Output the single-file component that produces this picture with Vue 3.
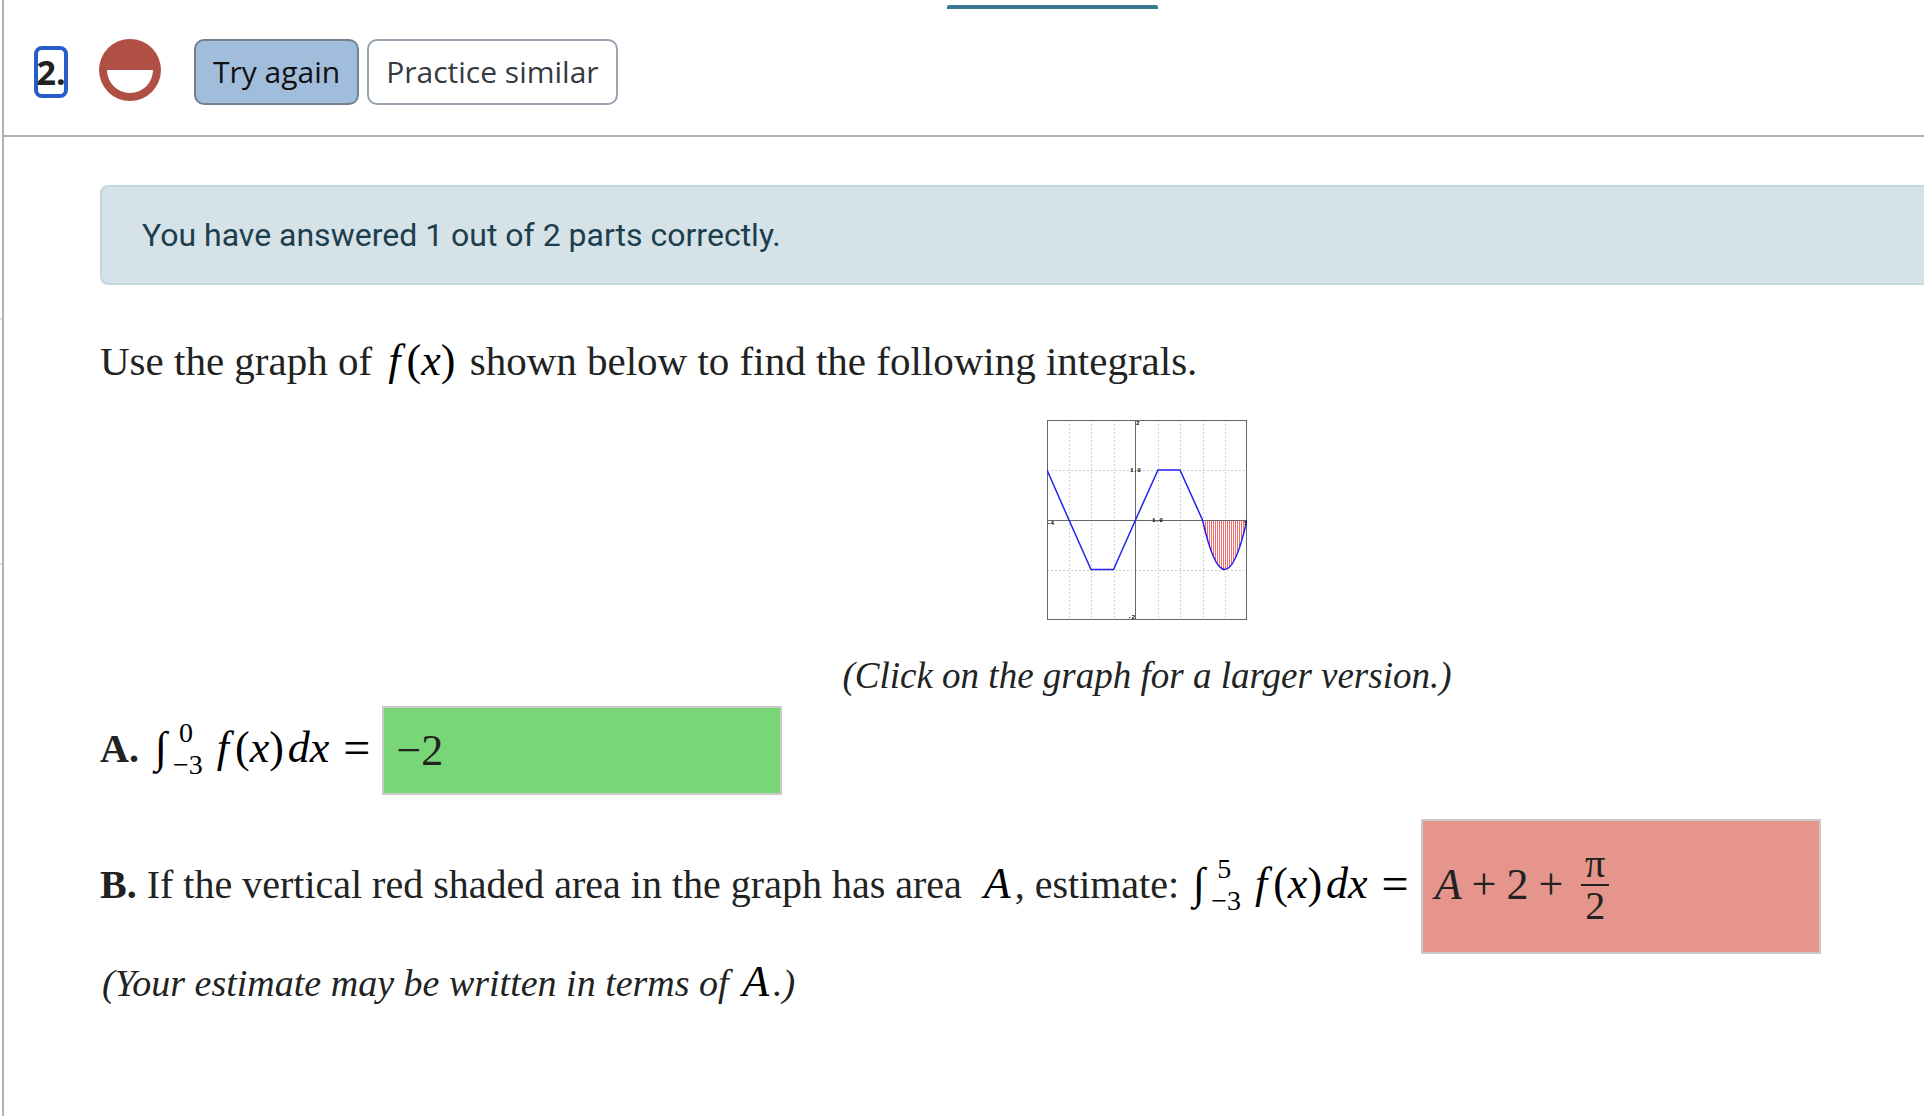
<script setup>
const unitX = 200 / 9
const gridX = [1, 2, 3, 5, 6, 7, 8].map((n) => Math.round(n * unitX) + 0.5)
const gridY = [50.5, 150.5]

const shading = Array.from({ length: 20 }, (_, i) => {
  const x = 158.5 + i * 2
  const t = (x - 7 * unitX) / (2 * unitX)
  return { x, y: 100 + 200 * t * (1 - t) }
})
</script>

<template>
  <div class="page">
    <div class="gutter"><i></i><i></i></div>
    <main class="panel">
      <header class="bar">
        <div class="tab-line"></div>
        <div class="controls">
          <h2 class="number" tabindex="-1">2.</h2>
          <svg class="status" viewBox="0 0 62 62" role="img" aria-label="Partially correct">
            <circle cx="31" cy="31" r="31" fill="#b04f44" />
            <path d="M8 31H54A23 23 0 0 1 8 31Z" fill="#fff" />
          </svg>
          <button class="btn primary" type="button">Try again</button>
          <button class="btn" type="button">Practice similar</button>
        </div>
      </header>

      <section class="content">
        <div class="alert" role="status">You have answered 1 out of 2 parts correctly.</div>

        <p class="intro">
          Use the graph of
          <span class="math inset"><i class="f">f</i>(<i>x</i>)</span>
          shown below to find the following integrals.
        </p>

        <figure class="figure">
          <a href="#graph" class="graph-link" aria-label="Open a larger graph">
            <svg class="graph" viewBox="0 0 200 200">
              <g class="grid">
                <line v-for="x in gridX" :key="'x' + x" :x1="x" :x2="x" y1="0" y2="200" />
                <line v-for="y in gridY" :key="'y' + y" x1="0" x2="200" :y1="y" :y2="y" />
              </g>
              <g class="shade">
                <line v-for="s in shading" :key="s.x" :x1="s.x" :x2="s.x" y1="100" :y2="s.y" />
              </g>
              <g class="axis">
                <line x1="0" x2="200" y1="100.5" y2="100.5" />
                <line x1="88.5" x2="88.5" y1="0" y2="200" />
                <rect x=".5" y=".5" width="199" height="199" />
              </g>
              <path
                class="curve"
                d="M0 50L22 100L44 149.500H66.500L88.500 100L111 50H133L155.500 100Q177.800 199 200 100"
              />
              <g class="tick">
                <text x="89" y="5">2</text>
                <text x="83" y="52">1.0</text>
                <text x="105" y="102">1.0</text>
                <text x="0" y="105">-4</text>
                <text x="197" y="105">5</text>
                <text x="81" y="199">-2</text>
              </g>
            </svg>
          </a>
          <figcaption class="caption">(Click on the graph for a larger version.)</figcaption>
        </figure>

        <div class="part">
          <label class="statement" for="answer-a">
            <b class="letter">A.</b>
            <span class="math"><span class="int">∫</span><span class="limits"><span class="upper">0</span><span>−3</span></span><i class="f">f</i>(<i>x</i>)<i class="d">d</i><i>x</i><span class="eq">=</span></span>
          </label>
          <input id="answer-a" class="answer right" type="text" value="−2" />
        </div>

        <div class="part second">
          <div id="label-b" class="statement">
            <b>B.</b> If the vertical red shaded area in the graph has area
            <span class="math area"><i>A</i></span>, estimate:
            <span class="math"><span class="int">∫</span><span class="limits"><span class="upper">5</span><span>−3</span></span><i class="f">f</i>(<i>x</i>)<i class="d">d</i><i>x</i><span class="eq">=</span></span>
          </div>
          <div class="answer wrong" role="textbox" tabindex="0" aria-labelledby="label-b">
            <i>A</i><span class="op">+</span><span>2</span><span class="op">+</span>
            <span class="frac"><span class="num">π</span><span class="den">2</span></span>
          </div>
        </div>

        <p class="note">
          (Your estimate may be written in terms of <span class="math inset">A</span>.)
        </p>
      </section>
    </main>
  </div>
</template>

<style>
body {
  margin: 0;
  background: #fff;
}
</style>

<style scoped>
* {
  box-sizing: border-box;
}
.page {
  display: flex;
  min-height: 100vh;
  overflow: hidden;
  color: #212323;
  font-family: "Liberation Serif", serif;
  font-size: 41px;
}
.gutter {
  width: 2px;
  padding-top: 318px;
  display: flex;
  flex-direction: column;
  gap: 243px;
}
.gutter i {
  height: 2px;
  background: #dfe2e6;
}
.panel {
  flex: 1;
  min-width: 0;
  border-left: 2px solid #adb3bb;
}
.bar {
  height: 137px;
  padding-top: 5px;
  border-bottom: 2px solid #adb3bb;
}
.tab-line {
  width: 211px;
  height: 4px;
  margin-left: 943px;
  background: #3a7891;
  border-radius: 2px 2px 0 0;
}
.controls {
  display: flex;
  padding: 30px 0 0 30px;
  align-items: flex-start;
  font-family: "Open Sans", "Noto Sans", sans-serif;
}
.number {
  display: flex;
  justify-content: center;
  width: 34px;
  height: 52px;
  margin: 7px 31px 0 0;
  border: 4px solid #265dc8;
  border-radius: 8px;
  font-size: 34px;
  font-weight: 700;
  line-height: 44px;
  white-space: nowrap;
}
.status {
  width: 62px;
  height: 62px;
  margin-right: 33px;
}
.btn {
  height: 66px;
  margin-right: 8px;
  padding: 0 17px 2px;
  border: 2px solid #98a2b0;
  border-radius: 10px;
  background: #fff;
  color: #343a40;
  font: inherit;
  font-size: 30px;
}
.primary {
  border-color: #74818f;
  background: #a1bddc;
  color: #111;
}
.content {
  margin-right: -270px;
  padding: 48px 0 0 96px;
}
.alert {
  height: 100px;
  padding-left: 40px;
  border: 2px solid #c4d7df;
  border-radius: 8px;
  background: #d5e2e8;
  color: #1d3e4c;
  font-family: Roboto, sans-serif;
  font-size: 32px;
  line-height: 96px;
}
.intro {
  margin: 46px 0 0;
  line-height: 60px;
}
.math {
  color: #000;
  font-size: 44px;
  line-height: 1;
  white-space: nowrap;
}
.inset {
  margin: 0 4px;
}
.f {
  margin: 0 6px 0 2px;
}
.d {
  margin-left: 4px;
}
.eq {
  margin-left: 14px;
  font-size: 48px;
  vertical-align: -2px;
}
.figure {
  display: flex;
  flex-direction: column;
  align-items: center;
  margin: 29px 0 0;
}
.graph-link {
  width: 200px;
  height: 200px;
}
.graph {
  display: block;
  width: 100%;
  height: 100%;
}
.grid line,
.shade line {
  shape-rendering: crispEdges;
}
.grid line {
  stroke: #d0d0d0;
  stroke-dasharray: 2 2;
}
.shade line {
  stroke: #f56a6a;
}
.axis line,
.axis rect {
  fill: none;
  stroke: #666;
}
.curve {
  fill: none;
  stroke: #2222f0;
  stroke-width: 1.5;
}
.tick text {
  font: bold 6px "Liberation Mono", monospace;
}
.caption {
  margin-top: 26px;
  font-size: 37px;
  font-style: italic;
  line-height: 60px;
}
.part {
  display: flex;
  align-items: center;
  font-size: 40px;
}
.second {
  margin-top: 24px;
}
.statement {
  margin-right: 12px;
  padding-bottom: 4px;
  white-space: nowrap;
}
.letter {
  margin-right: 12px;
}
.area {
  margin: 0 4px 0 12px;
}
.int {
  margin: 0 6px 0 4px;
}
.limits {
  display: inline-flex;
  flex-direction: column;
  margin-right: 12px;
  vertical-align: 20px;
  font-size: 28px;
  line-height: 32px;
}
.upper {
  padding-left: 6px;
}
.answer {
  width: 400px;
  padding: 0 12px;
  border: 2px solid #c9c9c9;
  border-radius: 0;
  color: #222;
  font-family: inherit;
  font-size: 44px;
}
.right {
  height: 89px;
  background: #79d677;
}
.wrong {
  display: flex;
  align-items: center;
  height: 135px;
  padding-bottom: 4px;
  background: #e5958b;
}
.op {
  margin: 0 10px;
}
.frac {
  display: flex;
  flex-direction: column;
  width: 28px;
  margin-left: 8px;
  font-size: 40px;
  line-height: 40px;
  text-align: center;
}
.num {
  border-bottom: 2px solid #222;
}
.note {
  margin: 0;
  padding-left: 2px;
  font-size: 38px;
  font-style: italic;
  line-height: 58px;
}
</style>
